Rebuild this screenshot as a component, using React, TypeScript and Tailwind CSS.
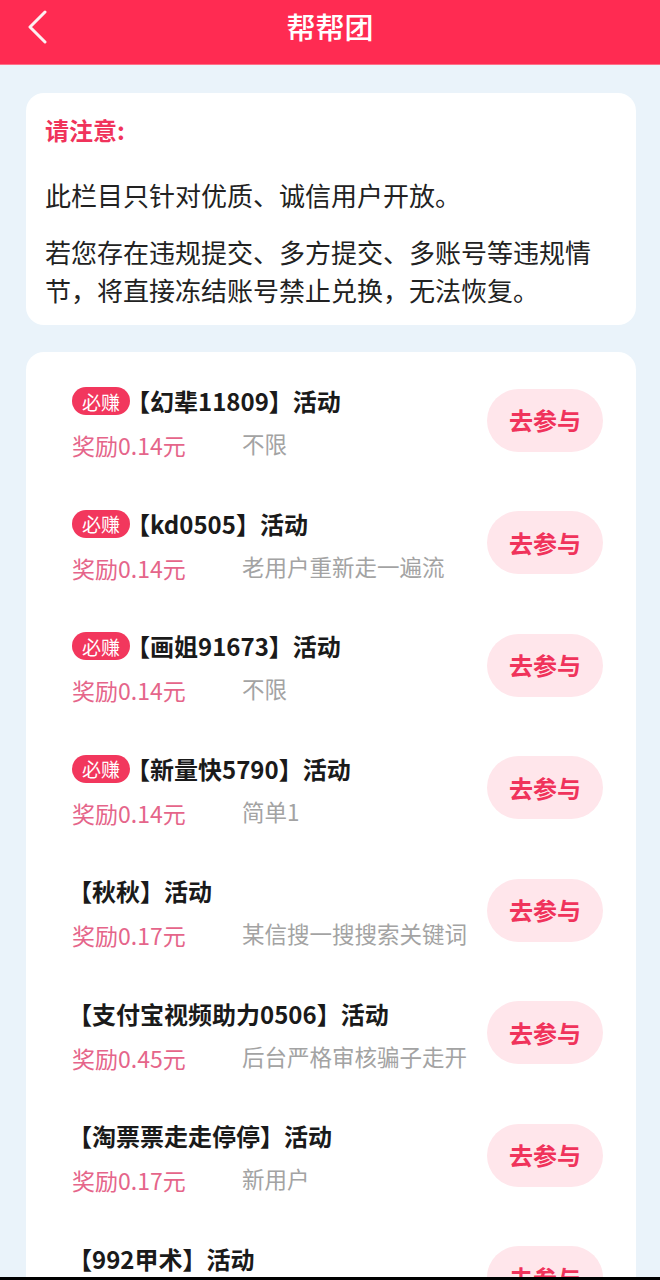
import React from 'react';

interface Task {
  name: string;
  reward: string;
  note: string;
  hot?: boolean;
}

const tasks: Task[] = [
  { name: '幻辈11809', reward: '0.14', note: '不限', hot: true },
  { name: 'kd0505', reward: '0.14', note: '老用户重新走一遍流', hot: true },
  { name: '画姐91673', reward: '0.14', note: '不限', hot: true },
  { name: '新量快5790', reward: '0.14', note: '简单1', hot: true },
  { name: '秋秋', reward: '0.17', note: '某信搜一搜搜索关键词' },
  { name: '支付宝视频助力0506', reward: '0.45', note: '后台严格审核骗子走开' },
  { name: '淘票票走走停停', reward: '0.17', note: '新用户' },
  { name: '992甲术', reward: '0.17', note: '新用户' },
];

const font = "font-['Noto_Sans_CJK_SC','Noto_Sans',sans-serif]";

const TaskRow: React.FC<{ task: Task }> = ({ task }) => (
  <div className="flex items-center justify-between h-[122.5px] pl-[46px] pr-[33px] shrink-0">
    <div className="flex flex-col">
      <div className="flex items-center h-[30px]">
        {task.hot && (
          <span className="flex items-center justify-center h-[28px] w-[58px] rounded-full bg-[#f2375d] text-white text-[19px] leading-none">
            必赚
          </span>
        )}
        <span className="text-[24px] font-bold text-[#1a1a1a] leading-[30px] -ml-[4px]">
          【{task.name}】活动
        </span>
      </div>
      <div className="flex items-center mt-[14px] h-[30px]">
        <span className="w-[170px] text-[23px] text-[#e5658a] leading-[30px]">奖励{task.reward}元</span>
        <span className="text-[22.5px] text-[#a3a3a3] leading-[30px] -mt-[4px]">{task.note}</span>
      </div>
    </div>
    <button className="w-[116px] h-[63px] rounded-full bg-[#ffe6eb] text-[#f0335b] text-[24px] font-bold -mt-[6px]">
      去参与
    </button>
  </div>
);

export default function App() {
  return (
    <div className={`${font} w-[660px] h-[1280px] overflow-hidden flex flex-col bg-[#eaf3fa]`}>
      <header className="h-[65px] shrink-0 bg-[#ff2b52] border-b border-[#ff6f88] flex items-center justify-center relative pb-[12px]">
        <svg className="absolute left-[26px] top-[10px]" width="24" height="34" viewBox="0 0 24 34" fill="none">
          <path d="M19 2 L4 17 L19 32" stroke="#fdf0f2" strokeWidth="3" strokeLinecap="round" strokeLinejoin="round" />
        </svg>
        <h1 className="text-white text-[29px] font-medium leading-none">帮帮团</h1>
      </header>

      <main className="flex-1 overflow-hidden flex flex-col pl-[26px] pr-[24px] pt-[28px]">
        <section className="bg-white rounded-[18px] px-[19px] pt-[18px] pb-[16px] shrink-0">
          <p className="text-[24px] font-bold text-[#f0335b] leading-[38px]">请注意:</p>
          <p className="text-[26px] text-[#222] leading-[38px] mt-[27px]">此栏目只针对优质、诚信用户开放。</p>
          <p className="text-[26px] text-[#222] leading-[38px] mt-[19px]">
            若您存在违规提交、多方提交、多账号等违规情节，将直接冻结账号禁止兑换，无法恢复。
          </p>
        </section>

        <section className="bg-white rounded-[18px] mt-[27px] pt-[10px] flex flex-col shrink-0">
          {tasks.map((t) => (
            <TaskRow key={t.name} task={t} />
          ))}
        </section>
      </main>
      <div className="h-[3px] bg-black shrink-0" />
    </div>
  );
}
